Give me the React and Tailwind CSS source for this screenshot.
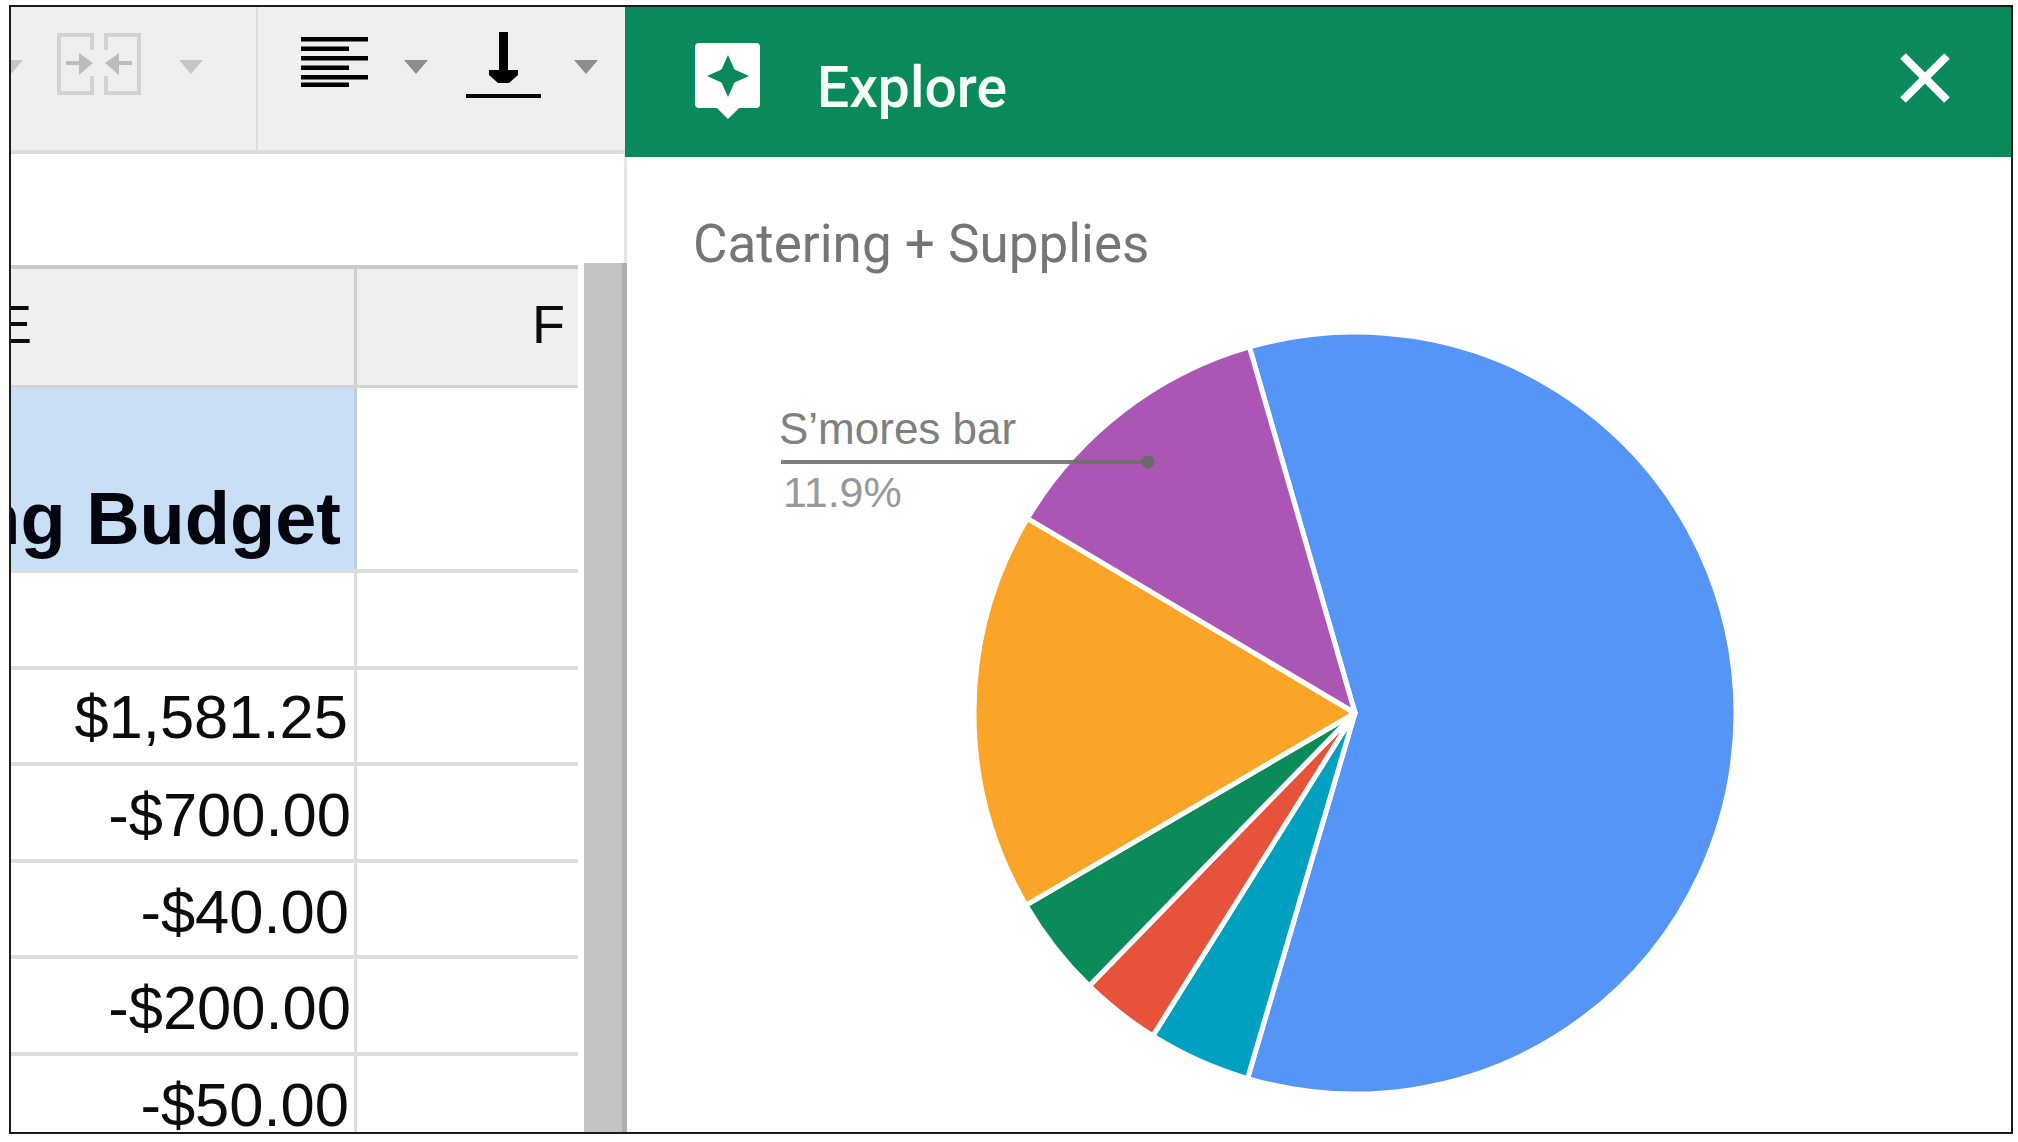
const CX = 577, CY = 381, R = 381;

const slices = [
  { fill: "#5595f5", from: [-105, -364], to: [-107, 364], large: 1 },
  { fill: "#00a0c1", from: [-107, 364], to: [-201, 321] },
  { fill: "#e7533a", from: [-201, 321], to: [-264, 271] },
  { fill: "#0a8b59", from: [-264, 271], to: [-327, 191] },
  { fill: "#faa428", from: [-327, 191], to: [-325, -193] },
  { fill: "#ab56b5", from: [-325, -193], to: [-105, -364] },
];

function onCircle([dx, dy]) {
  const a = Math.atan2(dy, dx);
  return [CX + R * Math.cos(a), CY + R * Math.sin(a)];
}

function slicePath(s) {
  const [x1, y1] = onCircle(s.from);
  const [x2, y2] = onCircle(s.to);
  return `M${CX} ${CY}L${x1} ${y1}A${R} ${R} 0 ${s.large || 0} 1 ${x2} ${y2}Z`;
}

function Caret({ color, className }) {
  return (
    <svg width="24" height="14" viewBox="0 0 24 14" className={className}>
      <polygon points="0,0 24,0 12,14" fill={color} />
    </svg>
  );
}

function Toolbar() {
  return (
    <div className="flex h-[143px] flex-none overflow-hidden bg-[#efefef]">
      <Caret color="#c6c6c6" className="mt-[53px] -ml-[12px] flex-none" />
      <svg width="84" height="62" viewBox="0 0 84 62" className="mt-[26px] ml-[34px] flex-none">
        <path d="M35 17V2H2V60H35V43M49 17V2H82V60H49V43" fill="none" stroke="#d2d2d2" strokeWidth="4" />
        <path d="M9 30H26M58 30H75" stroke="#bcbcbc" strokeWidth="4" />
        <polygon points="22,20 36,30 22,42" fill="#bcbcbc" />
        <polygon points="62,20 48,30 62,42" fill="#bcbcbc" />
      </svg>
      <Caret color="#c6c6c6" className="mt-[53px] ml-[38px] flex-none" />
      <div className="ml-[53px] w-[2px] flex-none bg-[#dcdcdc]" />
      <svg width="67" height="50" viewBox="0 0 67 50" className="mt-[30px] ml-[43px] flex-none">
        <path d="M0 2.2H67M0 11.7H48M0 21.2H67M0 30.7H48M0 40.2H67M0 47.7H48" stroke="#000" strokeWidth="4.5" />
      </svg>
      <Caret color="#8e8e8e" className="mt-[53px] ml-[36px] flex-none" />
      <svg width="75" height="66" viewBox="0 0 75 66" className="mt-[25px] ml-[38px] flex-none">
        <rect x="33" y="0" width="9" height="45" fill="#000" />
        <polygon points="23,38 52,38 52,43 43,51 32,51 23,43" fill="#000" />
        <rect x="0" y="62" width="75" height="4" fill="#000" />
      </svg>
      <Caret color="#8e8e8e" className="mt-[53px] ml-[33px] flex-none" />
    </div>
  );
}

const rows = [
  { text: "", pad: "pt-[14px] pr-[6px]" },
  { text: "$1,581.25", pad: "pt-[12px] pr-[6px]" },
  { text: "-$700.00", pad: "pt-[14px] pr-[3px]" },
  { text: "-$40.00", pad: "pt-[14px] pr-[5px]" },
  { text: "-$200.00", pad: "pt-[14px] pr-[3px]" },
  { text: "-$50.00", pad: "pt-[14px] pr-[5px]" },
];

function Grid() {
  return (
    <div className="w-[567px] flex-none font-['Liberation_Sans',Arial,sans-serif] text-[#0c0c0c]">
      <div className="flex h-[123px] border-t-[4px] border-b-[3px] border-t-[#c9c9c9] border-b-[#d4d4d4] bg-[#efefef]">
        <div className="h-full w-[343px] flex-none overflow-hidden pt-[25px] text-[54px] leading-[60px]">
          <div className="-ml-[15px]">E</div>
        </div>
        <div className="w-[3px] flex-none bg-[#cfcfcf]" />
        <div className="flex-1 pt-[25px] pr-[13px] text-right text-[54px] leading-[60px]">F</div>
      </div>
      <div className="flex h-[185px] border-b-[4px] border-[#dcdcdc]">
        <div className="flex h-full w-[343px] flex-none items-end justify-end overflow-hidden whitespace-nowrap bg-[#c9dff5] pr-[13px] pb-[9px] text-[74px] leading-[82px] font-bold text-[#05050f]">
          ng Budget
        </div>
        <div className="w-[3px] flex-none bg-[#bccfe2]" />
      </div>
      {rows.map((r, i) => (
        <div key={i} className="flex h-[96.5px] border-b-[4px] border-[#dddddd]">
          <div className={`h-full w-[343px] flex-none whitespace-nowrap text-right text-[61.5px] leading-[70px] ${r.pad}`}>
            {r.text}
          </div>
          <div className="w-[3px] flex-none bg-[#dddddd]" />
        </div>
      ))}
    </div>
  );
}

function LeftPanel() {
  return (
    <div className="flex h-full w-[616px] flex-none flex-col">
      <div className="border-b-[4px] border-[#dddddd]">
        <Toolbar />
      </div>
      <div className="h-[111px] flex-none border-r-[3px] border-[#e6e6e6]" />
      <div className="flex min-h-0 flex-1">
        <Grid />
        <div className="-mt-[2px] ml-[6px] flex h-[872px] flex-none">
          <div className="w-[38px] bg-[#c4c4c4]" />
          <div className="w-[5px] bg-[#adadad]" />
        </div>
      </div>
    </div>
  );
}

function ExploreHeader() {
  return (
    <div className="relative z-10 -ml-[2px] flex h-[150px] flex-none bg-[#0a8a5a] font-['Roboto',sans-serif] text-[#f4fff8]">
      <svg width="65" height="76" viewBox="0 0 65 76" className="mt-[36px] ml-[70px] flex-none">
        <path d="M4 0H61A4 4 0 0 1 65 4V61A4 4 0 0 1 61 65H44L33 76L22 65H4A4 4 0 0 1 0 61V4A4 4 0 0 1 4 0Z" fill="#fff" />
        <path d="M33 12L39.5 26.5L54 33L39.5 39.5L33 54L26.5 39.5L12 33L26.5 26.5Z" fill="#0a8a5a" />
      </svg>
      <div className="mt-[48px] ml-[57px] text-[57px] leading-[66px] font-medium">Explore</div>
      <svg width="50" height="50" viewBox="0 0 50 50" className="mt-[46px] mr-[61px] ml-auto flex-none">
        <path d="M3 3L47 47M47 3L3 47" stroke="#fff" strokeWidth="8" />
      </svg>
    </div>
  );
}

function Chart() {
  return (
    <div className="relative mt-[59px] ml-[151px] h-[764px]">
      <svg width="960" height="764" viewBox="0 0 960 764" className="block">
        {slices.map((s) => (
          <path key={s.fill} d={slicePath(s)} fill={s.fill} stroke="#fff" strokeWidth="5" strokeLinejoin="round" />
        ))}
        <rect x="3" y="128" width="367" height="4" fill="#6f6f6f" fillOpacity="0.9" />
        <circle cx="370" cy="130" r="6.5" fill="#6a6a6a" />
      </svg>
      <div className="absolute top-[72px] left-[1px] font-['Liberation_Sans',Arial,sans-serif] text-[44px] leading-[50px] whitespace-nowrap text-[#808080]">
        S’mores bar
      </div>
      <div className="absolute top-[136px] left-[5px] font-['Liberation_Sans',Arial,sans-serif] text-[43px] leading-[48px] whitespace-nowrap text-[#999999]">
        11.9%
      </div>
    </div>
  );
}

function RightPanel() {
  return (
    <div className="flex h-full min-w-0 flex-1 flex-col">
      <ExploreHeader />
      <div className="flex-1 overflow-hidden">
        <div className="mt-[58px] ml-[66px] font-['Roboto',sans-serif] text-[53px] leading-[58px] text-[#757575]">
          Catering + Supplies
        </div>
        <Chart />
      </div>
    </div>
  );
}

export default function App() {
  return (
    <div className="h-[1142px] w-[2018px] overflow-hidden bg-white pt-[5px] pl-[9px]">
      <div className="flex h-[1129px] w-[2004px] overflow-hidden border-2 border-[#1c1c1c] bg-white">
        <LeftPanel />
        <RightPanel />
      </div>
    </div>
  );
}
